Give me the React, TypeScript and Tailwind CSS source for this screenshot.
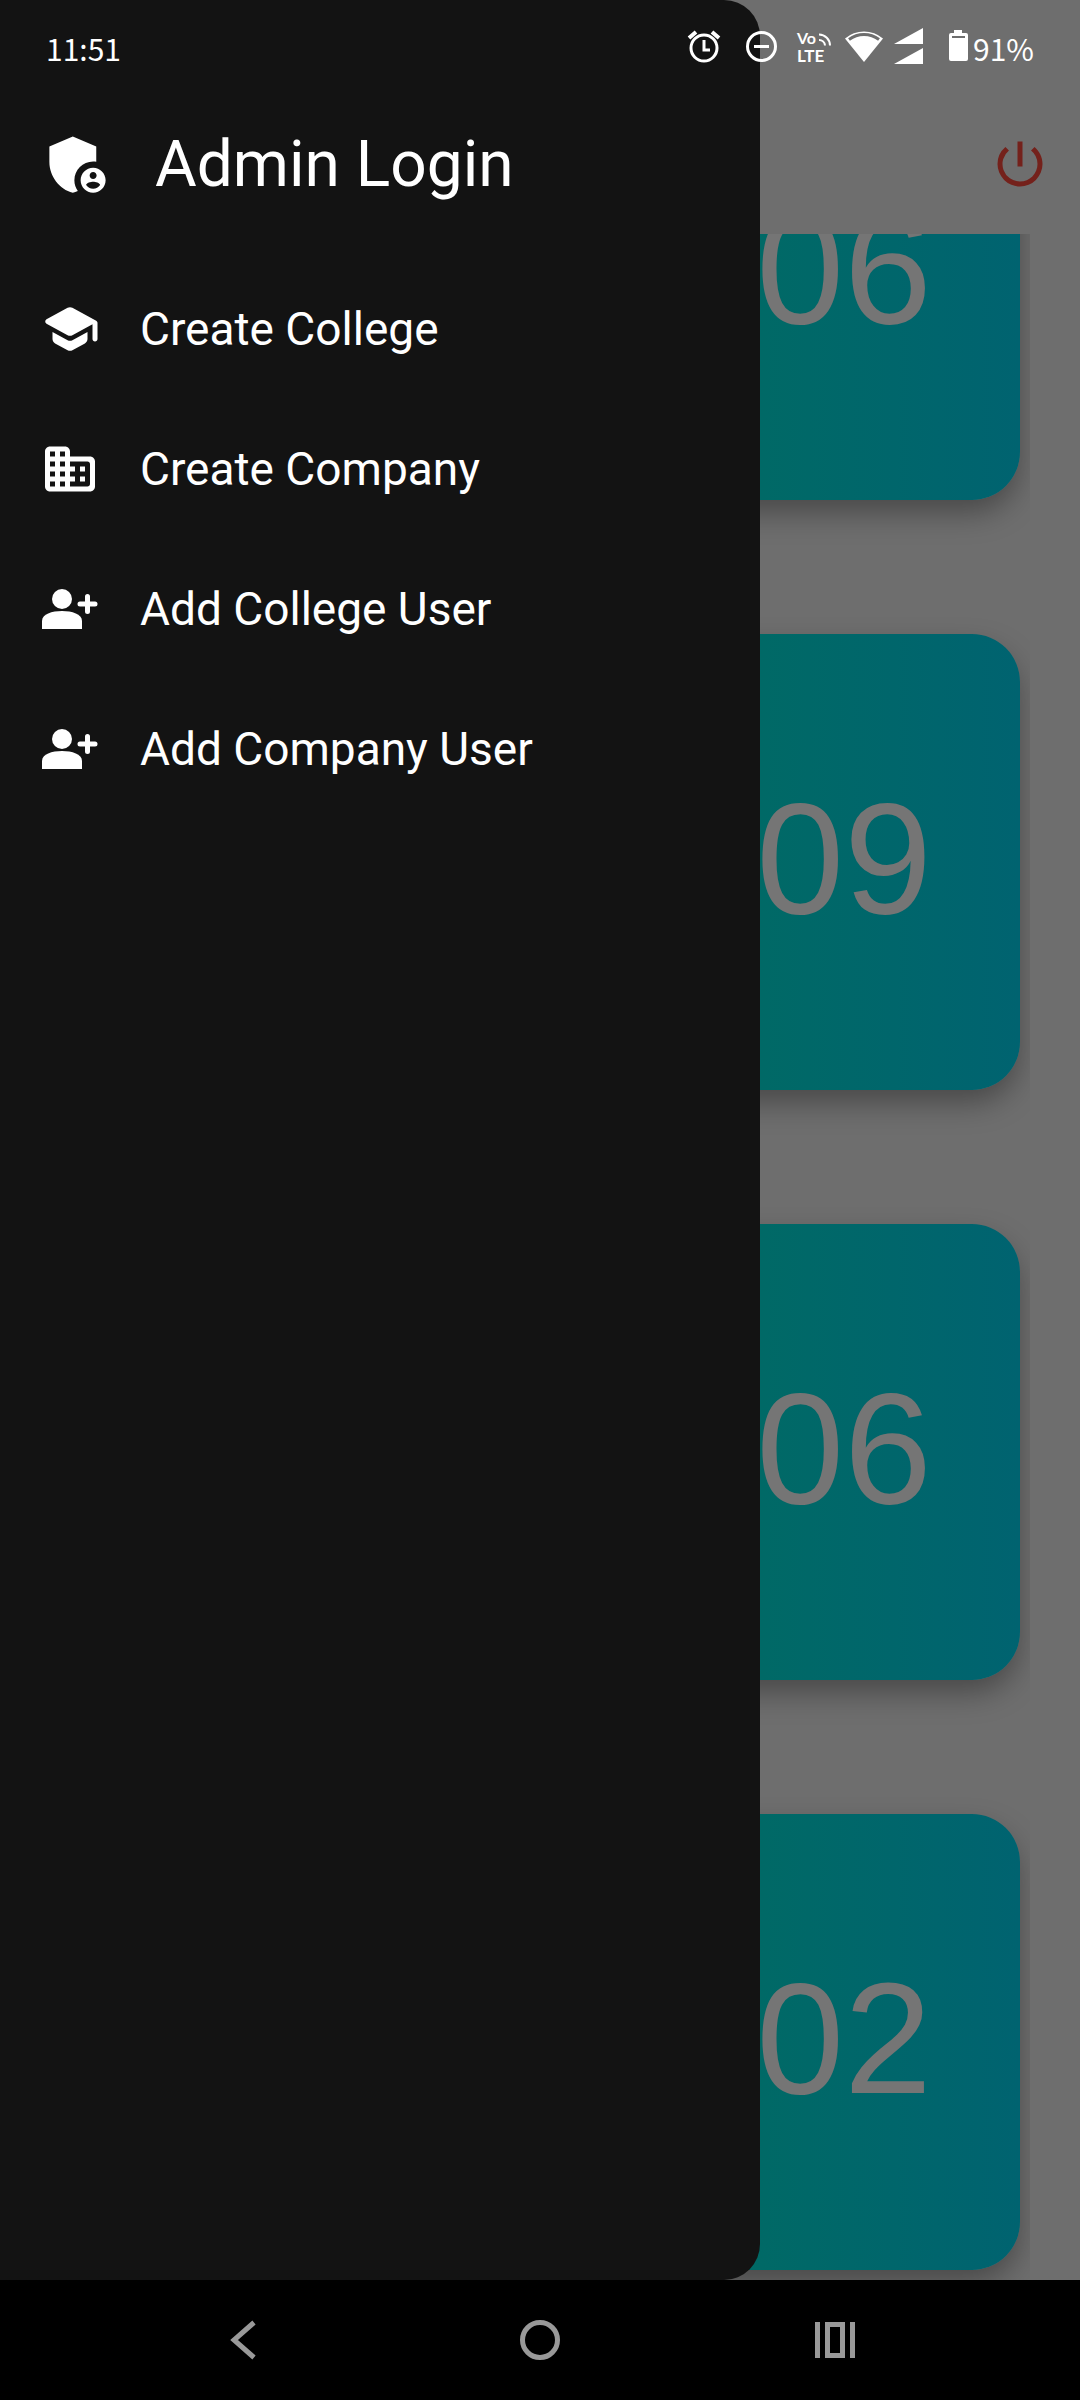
import { MdAdminPanelSettings, MdPowerSettingsNew } from "react-icons/md";

const cards = ["06", "09", "06", "02"];

function SchoolIcon() {
  return (
    <svg viewBox="0 0 24 24" className="size-[60px]" fill="currentColor" aria-hidden="true">
      <path d="M5 13.18v2.81c0 .73.4 1.41 1.04 1.76l5 2.73c.6.33 1.32.33 1.92 0l5-2.73c.64-.35 1.04-1.03 1.04-1.76v-2.81l-6.04 3.3c-.6.33-1.32.33-1.92 0L5 13.18zm6.04-9.66l-8.43 4.6c-.69.38-.69 1.38 0 1.76l8.43 4.6c.6.33 1.32.33 1.92 0L21 10.09V16c0 .55.45 1 1 1s1-.45 1-1V9.59c0-.37-.2-.7-.52-.88l-9.52-5.19c-.6-.32-1.32-.32-1.92 0z" />
    </svg>
  );
}

function CompanyIcon() {
  return (
    <svg viewBox="0 0 24 24" className="size-[60px]" fill="currentColor" aria-hidden="true">
      <path d="M12 7V5c0-1.100-.9-2-2-2H4c-1.100 0-2 .9-2 2v14c0 1.100.9 2 2 2h16c1.100 0 2-.9 2-2V9c0-1.100-.9-2-2-2h-8zM6 19H4v-2h2v2zm0-4H4v-2h2v2zm0-4H4V9h2v2zm0-4H4V5h2v2zm4 12H8v-2h2v2zm0-4H8v-2h2v2zm0-4H8V9h2v2zm0-4H8V5h2v2zm9 12h-7v-2h2v-2h-2v-2h2v-2h-2V9h7c.55 0 1 .45 1 1v8c0 .55-.45 1-1 1zm-1-8h-2v2h2v-2zm0 4h-2v2h2v-2z" />
    </svg>
  );
}

function AddUserIcon() {
  return (
    <svg viewBox="0 0 60 60" className="size-[60px]" fill="currentColor" aria-hidden="true">
      <circle cx="22" cy="20" r="10" />
      <path d="M2 50V42C2 35 12 32 22 32S42 35 42 42V50Z" />
      <path d="M47.500 17.500V32.500M40 25H55" stroke="currentColor" strokeWidth="5" strokeLinecap="round" />
    </svg>
  );
}

const items = [
  { label: "Create College", Icon: SchoolIcon },
  { label: "Create Company", Icon: CompanyIcon },
  { label: "Add College User", Icon: AddUserIcon },
  { label: "Add Company User", Icon: AddUserIcon },
];

function StatusIcons() {
  return (
    <svg width="285" height="44" viewBox="685 26 285 44" fill="none" stroke="white" aria-hidden="true">
      {/* alarm */}
      <circle cx="705" cy="48" r="13" strokeWidth="3" />
      <path d="M705 40V50H711" strokeWidth="3" />
      <path d="M690 38L697 32M713 32L720 38" strokeWidth="4" />
      {/* do not disturb */}
      <circle cx="762.500" cy="46.500" r="14" strokeWidth="3" />
      <path d="M755 46.500H770" strokeWidth="3" />
      {/* VoLTE */}
      <g fill="white" stroke="none" fontFamily="Lato, sans-serif" fontWeight="700">
        <text x="798" y="44" fontSize="16">Vo</text>
        <text x="798" y="62" fontSize="17">LTE</text>
      </g>
      <path d="M820 34.500A11 11 0 0 1 831 45.500M820 40A6 6 0 0 1 826 45.500" strokeWidth="2" />
      {/* wifi */}
      <path d="M846 38.500A29 29 0 0 1 884 38.500L865 62Z" fill="white" stroke="none" />
      <path d="M850 39.500A25 25 0 0 1 880 39.500" stroke="#6e6e6e" strokeWidth="3" />
      {/* signal */}
      <path d="M895 44L924 28V44ZM895 64L924 48V64Z" fill="white" stroke="none" />
      {/* battery */}
      <path d="M952 33H955V30H963V33H967Q969 33 969 35V59Q969 61 967 61H952Q950 61 950 59V35Q950 33 952 33Z" fill="white" stroke="none" />
      <path d="M953 37H966" stroke="#6e6e6e" strokeWidth="2" />
    </svg>
  );
}

function StatusBar() {
  return (
    <div className="absolute inset-x-0 top-0 z-20 flex h-24 items-center justify-between px-[46px] font-['Noto_Sans_CJK_SC',sans-serif] text-[30px] leading-none text-white">
      <span>11:51</span>
      <div className="flex items-center gap-1">
        <StatusIcons />
        <span>91%</span>
      </div>
    </div>
  );
}

function NavBar() {
  return (
    <footer className="flex h-[120px] shrink-0 items-center justify-between bg-black px-[19%] text-[#999999]">
      <button aria-label="Back" className="flex size-20 items-center justify-center">
        <svg viewBox="0 0 40 40" className="size-10" fill="none" stroke="currentColor" strokeWidth="5" aria-hidden="true">
          <path d="M29 2.500L9 20L29 37.500" />
        </svg>
      </button>
      <button aria-label="Home" className="flex size-20 items-center justify-center">
        <span className="size-10 rounded-full border-5 border-current" />
      </button>
      <button aria-label="Recent apps" className="flex size-20 items-center justify-center">
        <svg viewBox="0 0 40 40" className="size-10" fill="none" stroke="currentColor" strokeWidth="5" aria-hidden="true">
          <path d="M2.500 2V38M37.500 2V38M12.500 4.500H27.500V35.500H12.500Z" />
        </svg>
      </button>
    </footer>
  );
}

export default function App() {
  return (
    <div className="relative flex h-screen flex-col overflow-hidden bg-[#6e6e6e] font-['Roboto',sans-serif]">
      <StatusBar />
      <header className="flex h-[234px] shrink-0 items-end justify-end px-[30px] pb-10">
        <button aria-label="Log out" className="text-[#74211b]">
          <MdPowerSettingsNew className="size-[60px]" />
        </button>
      </header>
      <main className="mx-[50px] flex min-h-0 flex-1 flex-col justify-end gap-[134px] overflow-hidden px-2.5 pb-2.5">
        {cards.map((count, i) => (
          <section
            key={i}
            className="flex h-[456px] shrink-0 items-center justify-end rounded-[48px] bg-linear-to-r from-[#007846] to-[#006370] pr-[88px] pb-2 font-['Liberation_Sans',sans-serif] text-[158px] leading-none text-[#757575] shadow-[0_14px_30px_-2px_rgba(0,0,0,0.35)]"
          >
            {count}
          </section>
        ))}
      </main>
      <aside className="absolute bottom-[120px] left-0 top-0 z-10 w-[760px] rounded-r-[36px] bg-[#131313] pl-10 text-white">
        <div className="flex h-[259px] items-center gap-10 pt-[70px]">
          <MdAdminPanelSettings className="size-[75px]" />
          <h1 className="text-[64px] leading-none">Admin Login</h1>
        </div>
        <nav>
          {items.map(({ label, Icon }) => (
            <a key={label} href="#" className="flex h-[140px] w-fit items-center gap-10 text-[46px] leading-none">
              <Icon />
              {label}
            </a>
          ))}
        </nav>
      </aside>
      <NavBar />
    </div>
  );
}
